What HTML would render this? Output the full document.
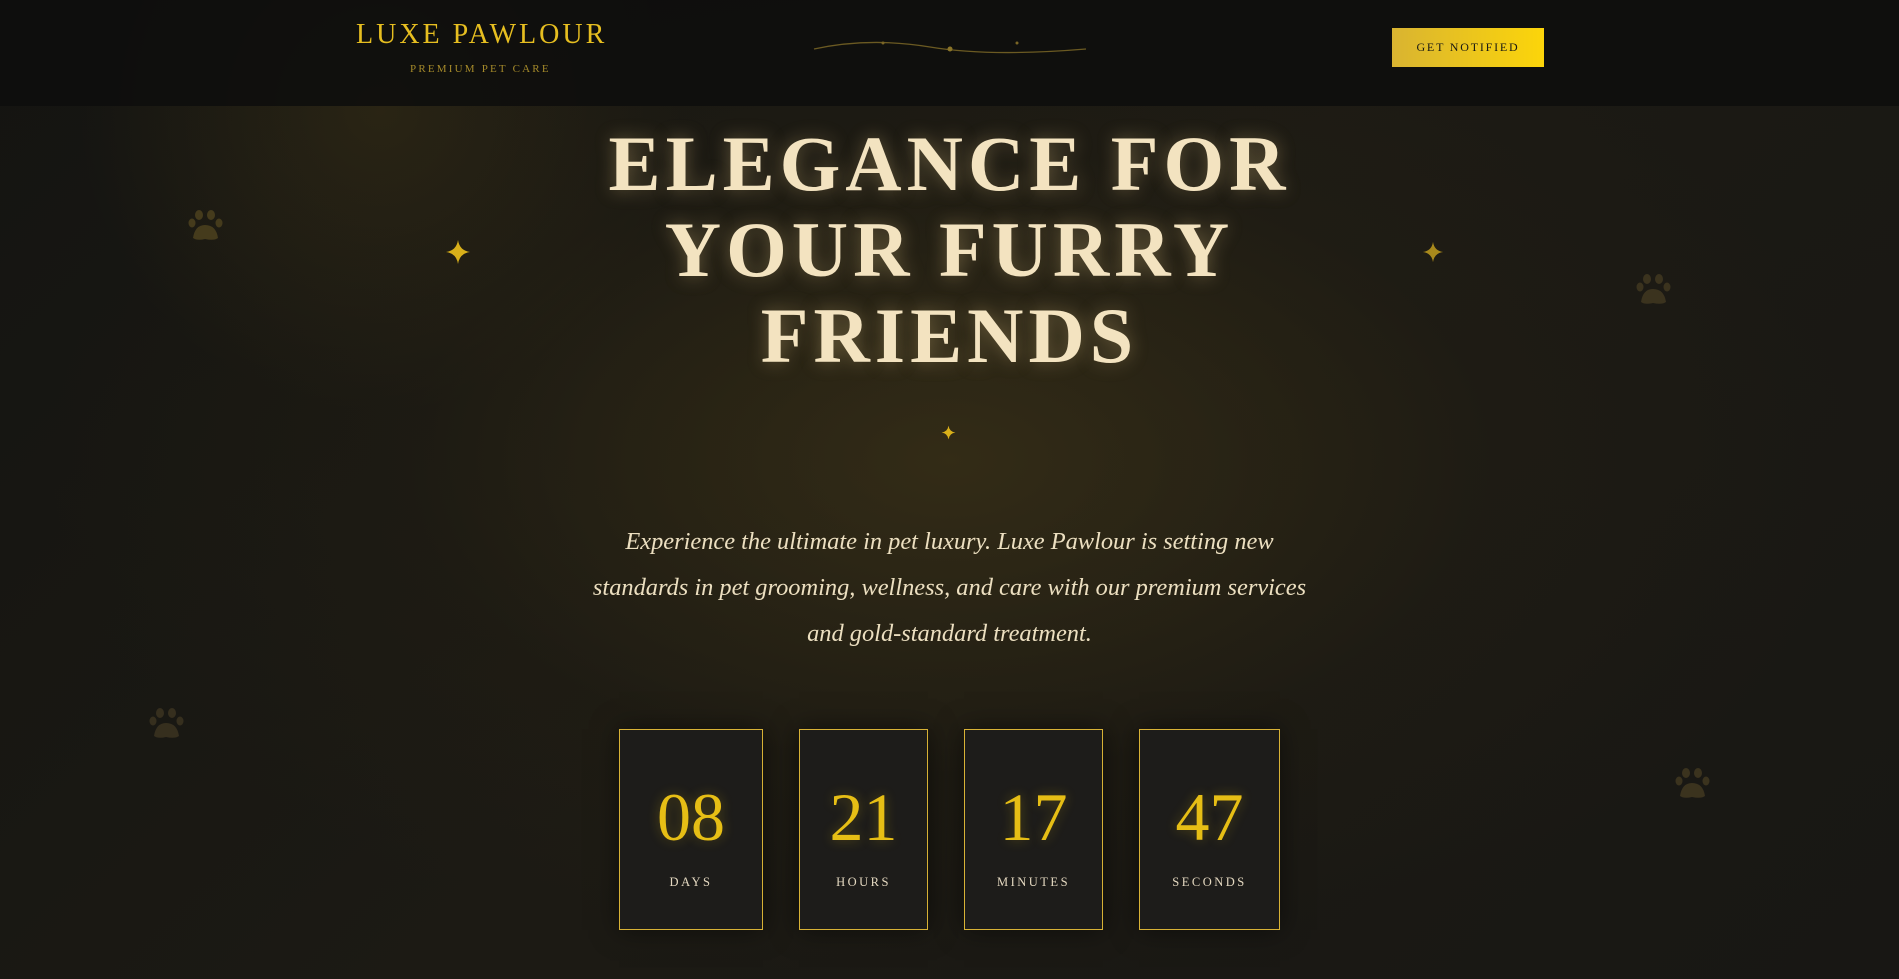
<!DOCTYPE html>
<html><head><meta charset="utf-8"><style>
*{margin:0;padding:0;box-sizing:border-box}
html,body{width:1899px;height:979px;overflow:hidden;background:#121210}
body{position:relative;font-family:"Liberation Serif",serif;
background:
radial-gradient(ellipse 900px 520px at 950px 460px,rgba(70,58,24,.55),rgba(40,34,18,.25) 60%,rgba(0,0,0,0) 100%),
radial-gradient(ellipse 300px 300px at 380px 110px,rgba(70,58,24,.4),rgba(0,0,0,0) 100%),
linear-gradient(135deg,#141411,#1c1a14 50%,#181714);}
header{position:absolute;left:0;top:0;width:1899px;height:106px;background:rgba(14,14,13,.88)}
.logo{position:absolute;left:356px;top:19px;font-size:28px;color:#e6be20;letter-spacing:3px;white-space:nowrap}
.sub{position:absolute;left:410px;top:63px;font-size:11px;color:#a58a2a;letter-spacing:2.2px;white-space:nowrap}
.btn{position:absolute;left:1392px;top:28px;width:152px;height:39px;background:linear-gradient(90deg,#d9b431,#fcd50a);color:#1a1a14;font-size:12px;letter-spacing:1.8px;text-align:center;line-height:39px}
h1{position:absolute;left:0;width:1899px;top:121px;text-align:center;font-size:78px;line-height:86px;font-weight:bold;color:#f3e3c0;letter-spacing:5px;text-shadow:0 0 18px rgba(240,210,140,.35)}
p{position:absolute;left:0;width:1899px;top:519px;text-align:center;font-style:italic;font-size:24.4px;line-height:46px;color:#ecdfc0;white-space:nowrap}
.box{position:absolute;top:729px;height:201px;border:1px solid #d8b236;background:#1d1c1a;box-shadow:0 0 25px rgba(0,0,0,.5);text-align:center}
.num{position:absolute;left:0;right:0;top:50px;font-size:68px;color:#e6be15;line-height:74px;text-shadow:0 0 12px rgba(230,190,20,.3)}
.lab{position:absolute;left:0;right:0;top:145px;font-size:12.5px;letter-spacing:2.5px;color:#e4d8c0}
.sp{position:absolute;color:#d9b01a}
.paw{position:absolute;opacity:.9}
</style></head><body>
<header>
<div class="logo">LUXE PAWLOUR</div>
<div class="sub">PREMIUM PET CARE</div>
<svg style="position:absolute;left:810px;top:36px" width="280" height="30"><path d="M4 13 Q60 1 120 11 T276 13" stroke="#6b5a22" stroke-width="1.3" fill="none"/><circle cx="140" cy="13" r="2.5" fill="#8a7428"/><circle cx="73" cy="7" r="1.5" fill="#7a6525"/><circle cx="207" cy="7" r="1.5" fill="#7a6525"/></svg>
<div class="btn">GET NOTIFIED</div>
</header>
<h1>ELEGANCE FOR<br>YOUR FURRY<br>FRIENDS</h1>
<svg class="sp" style="left:445px;top:239px" width="26" height="26" viewBox="0 0 26 26"><path d="M13 1 Q14.5 11.5 25 13 Q14.5 14.5 13 25 Q11.5 14.5 1 13 Q11.5 11.5 13 1Z" fill="#d9b01a"/></svg>
<svg class="sp" style="left:1422px;top:241px" width="22" height="22" viewBox="0 0 26 26"><path d="M13 1 Q14.5 11.5 25 13 Q14.5 14.5 13 25 Q11.5 14.5 1 13 Q11.5 11.5 13 1Z" fill="#a8891c"/></svg>
<svg class="sp" style="left:941px;top:425px" width="15" height="15" viewBox="0 0 26 26"><path d="M13 1 Q14.5 11.5 25 13 Q14.5 14.5 13 25 Q11.5 14.5 1 13 Q11.5 11.5 13 1Z" fill="#d9b01a"/></svg>
<svg class="paw" style="left:187px;top:208px" width="38" height="36" viewBox="0 0 38 36"><g fill="#4a3f1e"><ellipse cx="12" cy="7" rx="4" ry="5"/><ellipse cx="24" cy="7" rx="4" ry="5"/><ellipse cx="5" cy="15" rx="3.5" ry="4.5"/><ellipse cx="32" cy="15" rx="3.5" ry="4.5"/><path d="M6 30 Q8 17 18 17 Q29 17 31 30 Q27 33 18 31 Q10 33 6 30Z"/></g></svg>
<svg class="paw" style="left:1635px;top:272px" width="38" height="36" viewBox="0 0 38 36"><g fill="#3f3620"><ellipse cx="12" cy="7" rx="4" ry="5"/><ellipse cx="24" cy="7" rx="4" ry="5"/><ellipse cx="5" cy="15" rx="3.5" ry="4.5"/><ellipse cx="32" cy="15" rx="3.5" ry="4.5"/><path d="M6 30 Q8 17 18 17 Q29 17 31 30 Q27 33 18 31 Q10 33 6 30Z"/></g></svg>
<svg class="paw" style="left:148px;top:706px" width="38" height="36" viewBox="0 0 38 36"><g fill="#3a3220"><ellipse cx="12" cy="7" rx="4" ry="5"/><ellipse cx="24" cy="7" rx="4" ry="5"/><ellipse cx="5" cy="15" rx="3.5" ry="4.5"/><ellipse cx="32" cy="15" rx="3.5" ry="4.5"/><path d="M6 30 Q8 17 18 17 Q29 17 31 30 Q27 33 18 31 Q10 33 6 30Z"/></g></svg>
<svg class="paw" style="left:1674px;top:766px" width="38" height="36" viewBox="0 0 38 36"><g fill="#3f3620"><ellipse cx="12" cy="7" rx="4" ry="5"/><ellipse cx="24" cy="7" rx="4" ry="5"/><ellipse cx="5" cy="15" rx="3.5" ry="4.5"/><ellipse cx="32" cy="15" rx="3.5" ry="4.5"/><path d="M6 30 Q8 17 18 17 Q29 17 31 30 Q27 33 18 31 Q10 33 6 30Z"/></g></svg>
<p>Experience the ultimate in pet luxury. Luxe Pawlour is setting new<br>standards in pet grooming, wellness, and care with our premium services<br>and gold-standard treatment.</p>
<div class="box" style="left:619px;width:144px"><div class="num">08</div><div class="lab">DAYS</div></div>
<div class="box" style="left:799px;width:129px"><div class="num">21</div><div class="lab">HOURS</div></div>
<div class="box" style="left:964px;width:139px"><div class="num">17</div><div class="lab">MINUTES</div></div>
<div class="box" style="left:1139px;width:141px"><div class="num">47</div><div class="lab">SECONDS</div></div>
</body></html>
